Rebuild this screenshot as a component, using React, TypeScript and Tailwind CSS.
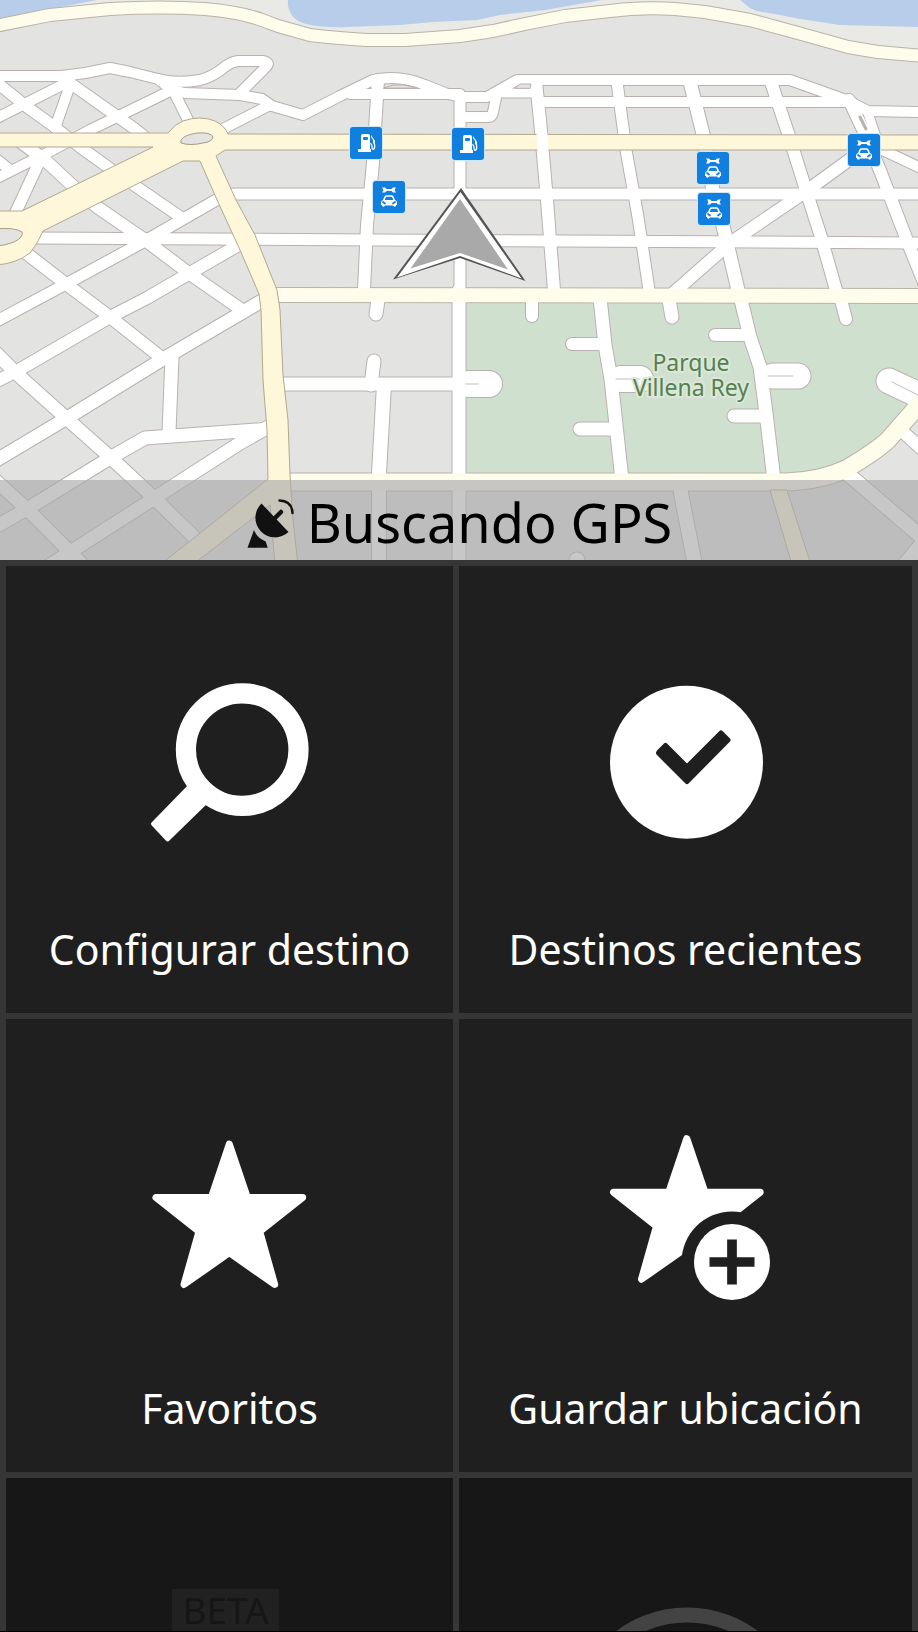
import type { ReactNode } from "react";

interface Road {
  d: string;
  w: number;
}

const streets: Road[] = [
  { d: "M-5 76H62L85 73L110 68L130 72L158 79Q178 84 200 80Q212 77 222 69Q230 62 238 61H262Q271 62 266 67L240 93", w: 10 },
  { d: "M-5 119L70 81", w: 10 },
  { d: "M-5 179L45 154L90 130L172 90L158 79", w: 10 },
  { d: "M-5 158L10 170", w: 10 },
  { d: "M172 90L185 93L240 95L262 99L272 106L303 115L340 96L373 80Q400 74 425 85L445 93L460 97H487L517 80H790L846 100L868 111L923 112", w: 10 },
  { d: "M268 106L215 133", w: 10 },
  { d: "M174 92L190 124", w: 10 },
  { d: "M70 83L135 129L150 141", w: 11 },
  { d: "M-5 81L27 107L52 125L80 147L112 170L182 218", w: 11 },
  { d: "M22 143L45 160L75 188L97 207L145 240L190 274L242 310", w: 12 },
  { d: "M70 85L55 128", w: 10 },
  { d: "M42 156L14 216", w: 11 },
  { d: "M35 238L923 243", w: 11 },
  { d: "M923 194H236Q226 194 218 199L145 241L66 284L-5 322", w: 11 },
  { d: "M242 243L190 273L147 298L110 317L17 371L-5 382", w: 12 },
  { d: "M265 299L243 312L163 359L67 418L-5 461", w: 13 },
  { d: "M22 250L66 284L110 317L163 359", w: 12 },
  { d: "M172 357L169 432", w: 13 },
  { d: "M-5 352L17 374L65 417L110 457L153 497L195 538", w: 13 },
  { d: "M-5 480L27 509L80 562", w: 13 },
  { d: "M270 429L145 438L110 458L27 509L-5 527", w: 13 },
  { d: "M270 426L240 443L153 499L50 565", w: 13 },
  { d: "M350 94H460", w: 10 },
  { d: "M495 93H537", w: 9 },
  { d: "M537 102H852", w: 10 },
  { d: "M378 80L373 163L367 225L364 290", w: 12 },
  { d: "M460 97V290", w: 11 },
  { d: "M459 290V565", w: 13 },
  { d: "M460 117H488Q492 117 493 112L496 98", w: 10 },
  { d: "M536 82L540 120L547 200L554 290", w: 12 },
  { d: "M617 82L626 150L638 217L649 290", w: 11 },
  { d: "M690 82L703 134L713 190L724 230L738 290L741 300L750 337L760 367L766 413L774 480", w: 13 },
  { d: "M771 82L788 133L805 187L821 237L836 290", w: 12 },
  { d: "M849 100L865 134L881 173L898 217L908 243L925 285", w: 12 },
  { d: "M868 113L876 137", w: 9 },
  { d: "M860 152L805 192L730 243L672 294", w: 12 },
  { d: "M874 146L923 169", w: 10 },
  { d: "M378 300L376 314", w: 13 },
  { d: "M374 361L371 385", w: 13 },
  { d: "M283 384H459", w: 13 },
  { d: "M384 385L379 473V565", w: 14 },
  { d: "M532 300V316", w: 12 },
  { d: "M669 300L672 317", w: 13 },
  { d: "M841 300L846 319", w: 12 },
  { d: "M600 298L605 345L611 379L622 480", w: 13 },
  { d: "M680 488L695 565", w: 14 },
  { d: "M572 344H602", w: 12 },
  { d: "M580 429H612", w: 13 },
  { d: "M715 335H748", w: 12 },
  { d: "M734 416H766", w: 13 },
  { d: "M468 384H489", w: 26 },
  { d: "M621 379H640", w: 26 },
  { d: "M773 376H798", w: 25 },
  { d: "M889 381L925 398", w: 25 },
  { d: "M903 432L925 452", w: 12 },
  { d: "M848 474L925 540L900 570", w: 14 },
  { d: "M577 560V565", w: 15 },
];

const avenues: Road[] = [
  { d: "M-5 26L50 15L110 9Q160 6 205 9Q240 12 262 20L278 26L310 35Q335 38 367 40H405L460 36L493 31L525 24L565 16L610 11Q640 7 675 9L705 12L750 20L798 33L848 47L878 52L923 56", w: 12 },
  { d: "M270 295L923 296", w: 14 },
  { d: "M280 482H786Q820 481 846 469Q875 452 888 440L925 398", w: 17 },
];

const highways = [
  "M-5 133H168Q175 124 183 121Q200 115 215 121Q225 126 228 134L923 135V150H225L216 156L236 200L255 235L277 290L280 310L283 375L288 420L290 475L293 520L298 565H275L270 505L192 565H160L268 479L267 430L263 380L261 310L259 294L240 250L218 202L200 161H183L43 231Q38 243 30 253Q16 264 -5 265V211H22L153 147H-5Z",
  "M770 490H787L811 565H792Z",
];

const islands = [
  "M181 140Q184 135 197 133Q211 132 213 137Q212 142 203 143Q190 146 181 143Z",
  "M-5 229Q15 227 22 232Q24 237 14 242Q4 246 -5 246Z",
];

function FuelPin({ x, y }: { x: number; y: number }) {
  return (
    <g transform={`translate(${x} ${y})`}>
      <rect x="-17" y="-17" width="34" height="34" rx="4" fill="#cfe5f8" />
      <rect x="-16" y="-16" width="32" height="32" rx="3" fill="#117fdd" />
      <path d="M-5 6V-7Q-5-9-3-9H2Q4-9 4-7V6H5V9H-8V6Z" fill="#fff" />
      <rect x="-3" y="-6" width="5" height="3" rx="1" fill="#117fdd" />
      <path d="M4 1Q6 0 6 4Q6 7 8 6Q9 5 8.500 1L8-3" fill="none" stroke="#fff" strokeWidth="1.300" />
      <path d="M5-8L9-2V2L7 0V-3L5-6Z" fill="#fff" />
    </g>
  );
}

function GaragePin({ x, y }: { x: number; y: number }) {
  return (
    <g transform={`translate(${x} ${y})`}>
      <rect x="-17" y="-17" width="34" height="34" rx="4" fill="#cfe5f8" />
      <rect x="-16" y="-16" width="32" height="32" rx="3" fill="#117fdd" />
      <path
        d="M-7-9.500H-4L-2.500-8H2.500L4-9.500H7L5.500-7L7-4.500H4L2.500-6H-2.500L-4-4.500H-7L-5.500-7Z"
        fill="#fff"
      />
      <path d="M-5.500 4L-4 0Q-3.500-1-2-1H2Q3.500-1 4 0L5.500 4" fill="none" stroke="#fff" strokeWidth="1.600" />
      <path d="M-5 3H5Q8 3 8 6V8H7V9Q5 10.500 4 8.500H-4Q-5 10.500-7 9V8H-8V6Q-8 3-5 3Z" fill="#fff" />
      <path d="M-6 5L-4 6.500M6 5L4 6.500" stroke="#117fdd" strokeWidth="1.800" strokeLinecap="round" />
    </g>
  );
}

function StreetMap() {
  return (
    <svg
      viewBox="0 0 918 560"
      preserveAspectRatio="xMidYMid slice"
      className="block h-full w-full"
      role="img"
      aria-label="Mapa"
    >
      <rect width="918" height="560" fill="#e3e3e2" />
      <path d="M0 0H918V56L848 47L750 20L675 9L610 11L493 31L405 40H367L278 26L205 9H110L0 25Z" fill="#e9e9e6" />
      <path
        d="M0 0H97L55 8L0 18ZM288 0Q287 9 293 17Q298 22 306 24Q325 28 347 27L400 25L433 22L477 20L500 15L545 10L602 0ZM740 0L750 8Q757 12 775 14L800 19L840 25L918 27V0Z"
        fill="#b8cdea"
      />
      <path d="M460 296H918V406L888 440L846 469L786 482H460Z" fill="#d0e0ce" />

      <g fill="none" strokeLinecap="round" strokeLinejoin="round">
        {streets.map(road => (
          <path key={road.d} d={road.d} stroke="#b9b1af" strokeWidth={road.w + 2} />
        ))}
        {avenues.map(road => (
          <path key={road.d} d={road.d} stroke="#b9b3a9" strokeWidth={road.w + 2} />
        ))}
        {streets.map(road => (
          <path key={road.d} d={road.d} stroke="#fff" strokeWidth={road.w} />
        ))}
        {avenues.map(road => (
          <path key={road.d} d={road.d} stroke="#fefceb" strokeWidth={road.w} />
        ))}
        <path d="M466 384H478M616 379H640M768 376H793M892 382L918 395" stroke="#c4bcb9" />
        <path d="M384 88L393 85H404L417 88ZM515 88L520 84H531L530 88Z" fill="#e3e3e2" stroke="#b9b1af" />
        <path d="M860 117L866 129" stroke="#b9b1af" strokeWidth="3" />
      </g>

      {highways.map(d => (
        <path key={d} d={d} fill="#fef7d9" stroke="#b3a890" />
      ))}
      {/* cross street opening onto the main avenue */}
      <path d="M542 133L543 151" fill="none" stroke="#fff" strokeWidth="11" />
      {islands.map(d => (
        <path key={d} d={d} fill="#e3e3e2" stroke="#a89c8c" />
      ))}

      <g
        fill="#56804f"
        stroke="#dbe8d9"
        strokeWidth="4"
        strokeLinejoin="round"
        paintOrder="stroke"
        textAnchor="middle"
        fontSize="23"
        fontFamily='"Noto Sans", "Open Sans", sans-serif'
      >
        <text x="691" y="371">Parque</text>
        <text x="691" y="396">Villena Rey</text>
      </g>

      <FuelPin x={366} y={143} />
      <FuelPin x={468} y={144} />
      <GaragePin x={389} y={197} />
      <GaragePin x={713} y={168} />
      <GaragePin x={714} y={209} />
      <GaragePin x={864} y={150} />

      <path d="M461 188L393 279.500L460 258L525.500 281Z" fill="#555" />
      <path d="M460.500 192L397 277.500L460 256L521.500 278.500Z" fill="#fff" />
      <path d="M460 199L410.500 268.500L460 253L508 269.500Z" fill="#a9a9a9" />
    </svg>
  );
}

function SatelliteIcon() {
  return (
    <svg viewBox="0 0 49 53" className="h-[53px] w-[49px]" aria-hidden="true">
      <path d="M15.500 7.500A19.600 19.600 0 0 0 42.500 36Z" fill="#111" />
      <path d="M27 24L35 16" stroke="#111" strokeWidth="4.500" strokeLinecap="round" />
      <path d="M33.500 4.500Q46 5 46.500 17" fill="none" stroke="#111" strokeWidth="2.500" strokeLinecap="round" />
      <path d="M8 34L1.500 51.700H21.700L19.700 45.500Q11 42 8 34Z" fill="#111" />
    </svg>
  );
}

const starPath
  = "M89.300 19L107.400 72.500H162.700L119.700 106.500L134.700 159.500L89.300 127.700L44 159.500L59 106.500L16 72.500H71.300Z";

function SearchIcon() {
  return (
    <svg viewBox="0 0 180 180" className="size-[180px]" aria-hidden="true">
      <circle cx="102.200" cy="77.600" r="56.300" fill="none" stroke="#fff" strokeWidth="20.200" />
      <path d="M50 114L13 152L27.500 167.500L65 131Z" fill="#fff" stroke="#fff" strokeWidth="4" strokeLinejoin="round" />
    </svg>
  );
}

function RecentIcon() {
  return (
    <svg viewBox="0 0 180 180" className="size-[180px]" aria-hidden="true">
      <circle cx="90.500" cy="90.300" r="76.500" fill="#fff" />
      <path
        d="M63.500 79.500L69.500 73.500L91 95L125 61L132 68L91 109.500L62.500 81Z"
        fill="#1f1f1f"
        stroke="#1f1f1f"
        strokeWidth="5"
        strokeLinejoin="round"
      />
    </svg>
  );
}

function StarIcon() {
  return (
    <svg viewBox="0 0 180 180" className="size-[180px]" aria-hidden="true">
      <path d={starPath} fill="#fff" stroke="#fff" strokeWidth="7" strokeLinejoin="round" />
    </svg>
  );
}

function StarPlusIcon() {
  return (
    <svg viewBox="0 0 180 180" className="size-[180px]" aria-hidden="true">
      <path
        d={starPath}
        transform="translate(1.500 -5.300)"
        fill="#fff"
        stroke="#fff"
        strokeWidth="7"
        strokeLinejoin="round"
      />
      <circle cx="136" cy="137" r="50.500" fill="#1f1f1f" />
      <circle cx="136" cy="137" r="38" fill="#fff" />
      <path d="M136 114.500V159.500M113.500 137H158.500" stroke="#1f1f1f" strokeWidth="9.700" />
    </svg>
  );
}

interface TileProps {
  label: string;
  icon: ReactNode;
}

function Tile({ label, icon }: TileProps) {
  return (
    <button
      type="button"
      className="flex flex-col items-center justify-between bg-[#1f1f1f] pt-[106px] pb-9 text-white"
    >
      {icon}
      <span className="text-[41px] leading-[56px] whitespace-nowrap">{label}</span>
    </button>
  );
}

const tiles: TileProps[] = [
  { label: "Configurar destino", icon: <SearchIcon /> },
  { label: "Destinos recientes", icon: <RecentIcon /> },
  { label: "Favoritos", icon: <StarIcon /> },
  { label: "Guardar ubicación", icon: <StarPlusIcon /> },
];

export default function App() {
  return (
    <main className="flex h-screen flex-col overflow-hidden border-b border-black bg-[#363636] font-['Noto_Sans','Open_Sans',sans-serif]">
      <section className="relative h-[560px] shrink-0">
        <StreetMap />
        <div className="absolute inset-x-0 bottom-0 flex h-20 items-center justify-center gap-3 bg-[#a9a9a9]/65 pt-1 text-black">
          <SatelliteIcon />
          <p className="text-[54px] leading-[76px]">Buscando GPS</p>
        </div>
      </section>

      <nav className="grid min-h-0 flex-1 grid-cols-[447fr_453fr] grid-rows-[447px_453px_minmax(0,1fr)] gap-1.5 px-1.5 pt-1.5">
        {tiles.map(tile => (
          <Tile key={tile.label} label={tile.label} icon={tile.icon} />
        ))}
        <button
          type="button"
          disabled
          className="flex items-start justify-center overflow-hidden bg-[#171717] pt-[111px]"
        >
          <span className="mr-2 bg-[#212121] px-2.5 text-[37px] leading-[42px] text-[#161616]">BETA</span>
        </button>
        <button
          type="button"
          disabled
          aria-label="Más"
          className="flex items-start justify-center overflow-hidden bg-[#171717] pt-32"
        >
          <svg viewBox="0 0 240 240" className="size-60 shrink-0" aria-hidden="true">
            <circle cx="121" cy="120" r="111" fill="none" stroke="#434343" strokeWidth="15" />
          </svg>
        </button>
      </nav>
    </main>
  );
}
